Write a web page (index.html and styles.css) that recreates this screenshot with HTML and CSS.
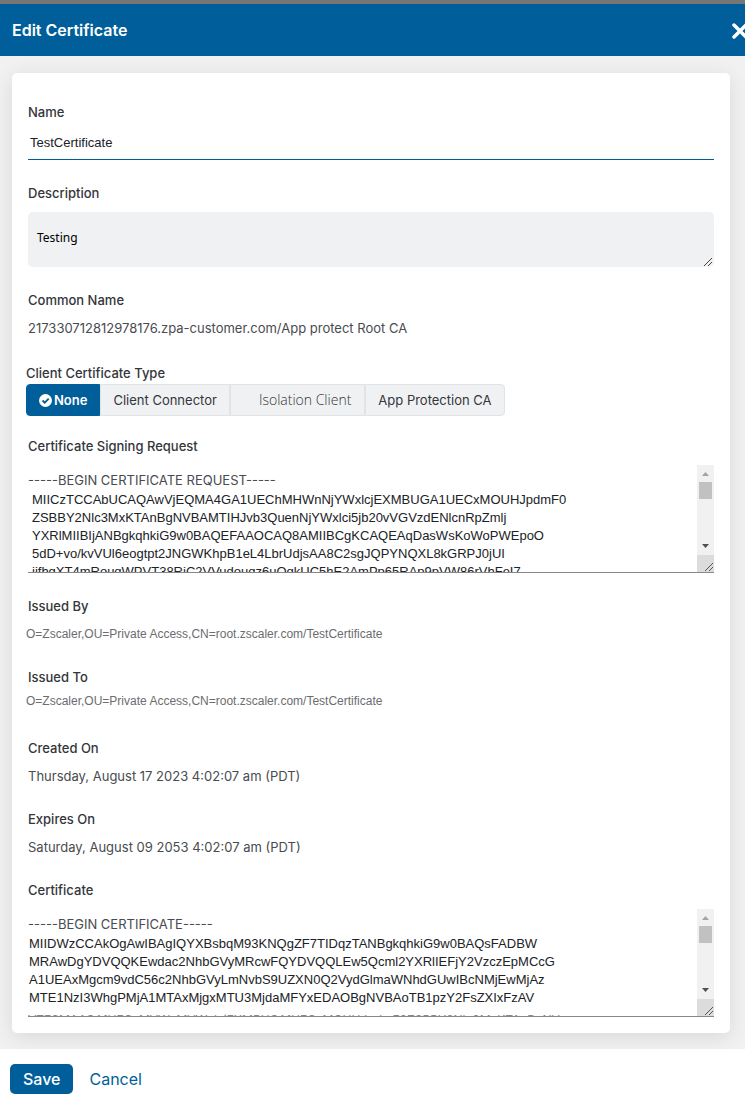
FILE: index.html
```html
<!DOCTYPE html>
<html lang="en">
<head>
  <meta charset="UTF-8" />
  <meta name="viewport" content="width=device-width, initial-scale=1" />
  <title>Edit Certificate</title>
  <link rel="stylesheet" href="styles.css">
</head>
<body>

  <header class="header">
    <h1>Edit Certificate</h1>
    <button class="close" type="button" aria-label="Close">
      <svg width="18" height="18" viewBox="0 0 18 18"><path d="M3 4l12 12M15 4L3 16" stroke="#fff" stroke-width="3.500" stroke-linecap="round" /></svg>
    </button>
  </header>

  <form class="form">
    <main class="content">
      <div class="card">
        <div class="field">
          <label for="name">Name</label>
          <input class="name-input" id="name" type="text" value="TestCertificate" />
        </div>

        <div class="field boxed">
          <label for="description">Description</label>
          <div class="description-box">
            <textarea class="description" id="description">Testing</textarea>
            <svg class="grip" width="10" height="10" viewBox="0 0 10 10"><path d="M0 9L8 1M4 9L8 5" /></svg>
          </div>
        </div>

        <div class="field">
          <h2>Common Name</h2>
          <p>217330712812978176.zpa-customer.com/App protect Root CA</p>
        </div>

        <div class="field type-field">
          <h2>Client Certificate Type</h2>
          <div class="segments">
            <button class="segment active" type="button">
              <svg width="13" height="13" viewBox="0 0 13 13"><circle cx="6.5" cy="6.5" r="6.5" fill="#fff" /><path d="M3.5 6.5l2.2 2.2 4-4" fill="none" stroke="#005f9a" stroke-width="1.8" /></svg>
              None
            </button>
            <button class="segment" type="button">Client Connector</button>
            <button class="segment isolation" type="button">Isolation Client</button>
            <button class="segment" type="button">App Protection CA</button>
          </div>
        </div>

        <div class="field boxed">
          <label for="csr">Certificate Signing Request</label>
          <div class="cert-box">
            <div class="cert-text">
              <p class="cert-begin">-----BEGIN CERTIFICATE REQUEST-----</p>
              <textarea class="cert-body csr-body" id="csr" wrap="off" readonly>MIICzTCCAbUCAQAwVjEQMA4GA1UEChMHWnNjYWxlcjEXMBUGA1UECxMOUHJpdmF0
ZSBBY2Nlc3MxKTAnBgNVBAMTIHJvb3QuenNjYWxlci5jb20vVGVzdENlcnRpZmlj
YXRlMIIBIjANBgkqhkiG9w0BAQEFAAOCAQ8AMIIBCgKCAQEAqDasWsKoWoPWEpoO
5dD+vo/kvVUl6eogtpt2JNGWKhpB1eL4LbrUdjsAA8C2sgJQPYNQXL8kGRPJ0jUI
jjfhgXT4mRouqWPVT38RiC2VVudouqz6uQqkUC5hE2AmPp65RAp9pVW86rVhFeI7</textarea>
            </div>
            <svg class="scrollbar" width="17" height="107" viewBox="0 0 17 107"><path d="M0 0h17v107H0z" fill="#f1f1f1" /><path d="M5 11h7L8.500 7z" fill="#a3a3a3" /><path d="M2 17h13v17H2z" fill="#c1c1c1" /><path d="M5 79h7l-3.500 4z" fill="#505050" /><path d="M0 90h17v17H0z" fill="#dcdcdc" /><path d="M8 106l8-8M12 106l4-4" stroke="#555" fill="none" /></svg>
          </div>
        </div>

        <div class="field issued">
          <h2>Issued By</h2>
          <p>O=Zscaler,OU=Private Access,CN=root.zscaler.com/TestCertificate</p>
        </div>

        <div class="field issued issued-to">
          <h2>Issued To</h2>
          <p>O=Zscaler,OU=Private Access,CN=root.zscaler.com/TestCertificate</p>
        </div>

        <div class="field">
          <h2>Created On</h2>
          <p>Thursday, August 17 2023 4:02:07 am (PDT)</p>
        </div>

        <div class="field">
          <h2>Expires On</h2>
          <p>Saturday, August 09 2053 4:02:07 am (PDT)</p>
        </div>

        <div class="field boxed">
          <label for="certificate">Certificate</label>
          <div class="cert-box">
            <div class="cert-text">
              <p class="cert-begin">-----BEGIN CERTIFICATE-----</p>
              <textarea class="cert-body" id="certificate" wrap="off" readonly>MIIDWzCCAkOgAwIBAgIQYXBsbqM93KNQgZF7TIDqzTANBgkqhkiG9w0BAQsFADBW
MRAwDgYDVQQKEwdac2NhbGVyMRcwFQYDVQQLEw5Qcml2YXRlIEFjY2VzczEpMCcG
A1UEAxMgcm9vdC56c2NhbGVyLmNvbS9UZXN0Q2VydGlmaWNhdGUwIBcNMjEwMjAz
MTE1NzI3WhgPMjA1MTAxMjgxMTU3MjdaMFYxEDAOBgNVBAoTB1pzY2FsZXIxFzAV</textarea>
              <p class="cert-tail">VTESMAAGA1UECxMVWxMVWxlcjEXMBUGA1UECxMOUHJpdmF0ZSBBY2Nlc3MxKTAnBgNV</p>
            </div>
            <svg class="scrollbar" width="17" height="107" viewBox="0 0 17 107"><path d="M0 0h17v107H0z" fill="#f1f1f1" /><path d="M5 11h7L8.500 7z" fill="#a3a3a3" /><path d="M2 17h13v17H2z" fill="#c1c1c1" /><path d="M5 79h7l-3.500 4z" fill="#505050" /><path d="M0 90h17v17H0z" fill="#dcdcdc" /><path d="M8 106l8-8M12 106l4-4" stroke="#555" fill="none" /></svg>
          </div>
        </div>
      </div>
    </main>

    <footer class="footer">
      <button class="save" type="submit">Save</button>
      <button class="cancel" type="button">Cancel</button>
    </footer>
  </form>

</body>
</html>
```
FILE: styles.css
```css
* {
  box-sizing: border-box;
}
body {
  margin: 0;
  font-family: Inter, sans-serif;
  font-size: 13px;
  line-height: 20px;
  color: #202226;
  background: #fff;
  overflow-x: hidden;
}
h1, h2, p {
  margin: 0;
}
button, input, textarea {
  font: inherit;
  color: inherit;
  border: none;
}
button {
  cursor: pointer;
}
.header {
  display: flex;
  justify-content: space-between;
  align-items: center;
  height: 56px;
  padding-left: 12px;
  border-top: 4px solid #777;
  background: #005f9a;
  color: #fff;
}
.header h1 {
  font-size: 16px;
  font-weight: 600;
}
.close {
  display: flex;
  padding: 0;
  margin-right: -4px;
  background: none;
}
.content {
  padding: 17px 15px 16px 12px;
  background: #f1f1f1;
}
.card {
  display: flex;
  flex-direction: column;
  gap: 23px;
  padding: 29px 16px 16px;
  border-radius: 5px;
  background: #fff;
  box-shadow: 0 4px 20px rgba(0, 0, 0, 0.1);
}
.field {
  display: flex;
  flex-direction: column;
  gap: 8px;
}
.field.boxed {
  gap: 9px;
}
.field label, .field h2 {
  font-size: 13px;
  font-weight: 500;
  color: #33363a;
}
.field p {
  font-weight: 400;
  color: #484b50;
}
.name-input {
  width: 100%;
  height: 30px;
  padding: 0 2px 4px;
  border-bottom: 1px solid #005f9a;
  font-family: "Liberation Sans", sans-serif;
  outline: none;
}
.description-box {
  position: relative;
  display: flex;
}
.description {
  width: 100%;
  height: 55px;
  padding: 16px 9px;
  border-radius: 5px;
  background: #f0f1f3;
  font-family: "Noto Sans", sans-serif;
  font-size: 12px;
  color: #000;
  resize: none;
}
.grip {
  position: absolute;
  right: 0;
  bottom: 0;
  stroke: #444;
}
.type-field {
  gap: 1px;
  margin: 2px 0 -3px -2px;
}
.segments {
  display: flex;
}
.segment {
  display: flex;
  align-items: center;
  gap: 2px;
  height: 32px;
  padding: 0 12px;
  border: 1px solid #e2e3e5;
  background: #f0f1f3;
  color: #33363a;
}
.segment.active {
  border-color: #005f9a;
  border-radius: 4px 0 0 4px;
  background: #005f9a;
  color: #fff;
  font-weight: 600;
}
.segment:last-child {
  border-radius: 0 4px 4px 0;
}
.segment.isolation {
  padding: 0 13px 0 28px;
  font-family: "Open Sans", sans-serif;
  font-size: 14px;
  font-weight: 300;
}
.cert-box {
  display: flex;
  height: 108px;
  border-bottom: 1px solid #888;
}
.cert-text {
  flex: 1;
  min-width: 0;
  padding-top: 5px;
  overflow: hidden;
}
.cert-body {
  display: block;
  width: 100%;
  height: 72px;
  margin-top: 1px;
  padding: 0 1px;
  font-family: "Liberation Sans", sans-serif;
  line-height: 18px;
  overflow: hidden;
  resize: none;
  outline: none;
}
.csr-body {
  height: 90px;
  padding: 0 4px;
}
.field .cert-tail {
  padding-top: 6px;
  font-size: 12px;
  line-height: 14px;
  color: #888;
}
.scrollbar {
  flex: none;
}
.field.issued p {
  margin-left: -2px;
  font-family: "Liberation Sans", sans-serif;
  font-size: 12px;
  color: #6b6d70;
}
.issued-to {
  gap: 4px;
  margin-bottom: 4px;
}
.footer {
  display: flex;
  align-items: center;
  gap: 16px;
  padding: 15px 10px 10px;
  font-size: 16px;
}
.save {
  height: 30px;
  padding: 0 13px;
  border-radius: 5px;
  background: #005f9a;
  color: #fff;
  font-weight: 500;
}
.cancel {
  padding: 0;
  background: none;
  color: #005f9a;
}
```
